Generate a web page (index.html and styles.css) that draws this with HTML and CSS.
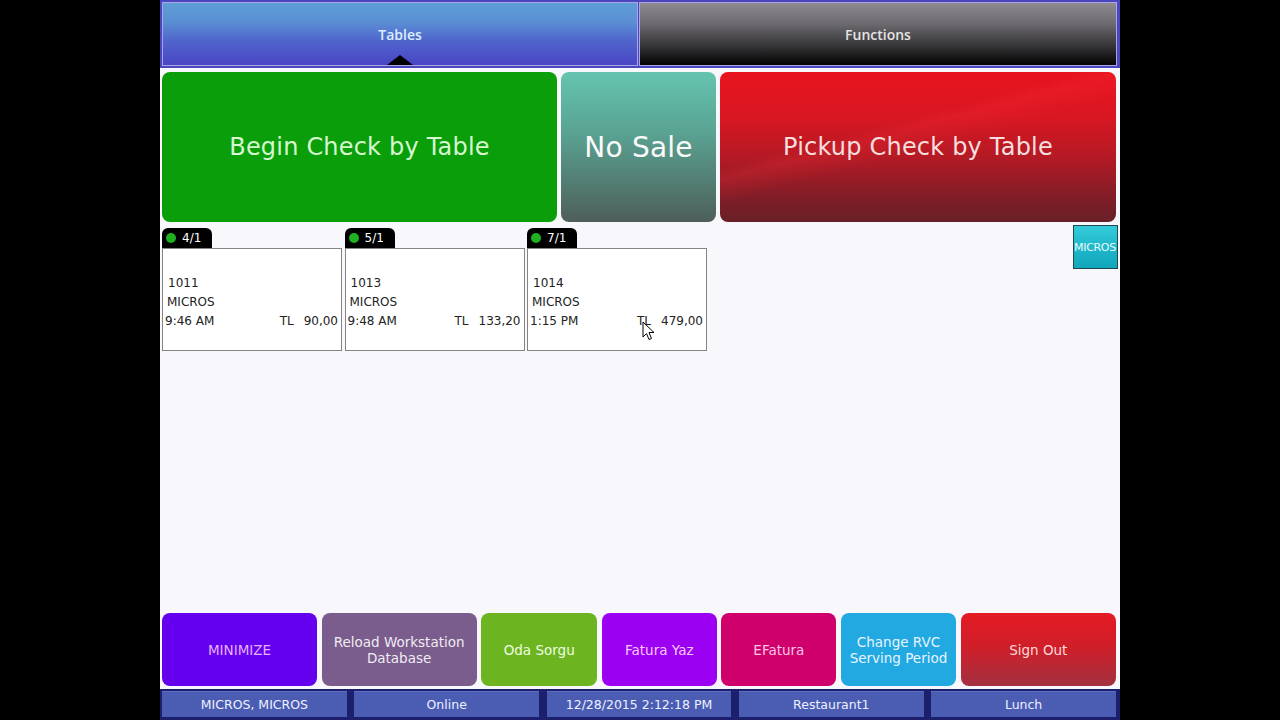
FILE: index.html
```html
<!DOCTYPE html>
<html lang="en">
<head>
    <meta charset="UTF-8">
    <title>Workstation - Tables</title>
    <link rel="stylesheet" href="styles.css">
</head>
<body>
<div class="app">
    <!-- Page tabs -->
    <div class="tabs">
        <div class="tab tab-active">Tables<span class="tab-arrow"></span></div>
        <div class="tab tab-dark">Functions</div>
    </div>

    <div class="main">
        <div class="actions">
            <div class="action action-begin">Begin Check by Table</div>
            <div class="action action-nosale">No Sale</div>
            <div class="action action-pickup">Pickup Check by Table</div>
        </div>

        <div class="table-row">
            <div class="checks">
                <div class="check">
                    <div class="check-tab"><span class="dot"></span>4/1</div>
                    <div class="check-body">
                        <div class="line">1011</div>
                        <div class="line">MICROS</div>
                        <div class="line split"><span>9:46 AM</span><span>TL<span class="amt">90,00</span></span></div>
                    </div>
                </div>
                <div class="check">
                    <div class="check-tab"><span class="dot"></span>5/1</div>
                    <div class="check-body">
                        <div class="line">1013</div>
                        <div class="line">MICROS</div>
                        <div class="line split"><span>9:48 AM</span><span>TL<span class="amt">133,20</span></span></div>
                    </div>
                </div>
                <div class="check">
                    <div class="check-tab"><span class="dot"></span>7/1</div>
                    <div class="check-body">
                        <div class="line">1014</div>
                        <div class="line">MICROS</div>
                        <div class="line split"><span>1:15 PM</span><span>TL<span class="amt">479,00</span></span></div>
                    </div>
                </div>
            </div>
            <div class="side-btn">MICROS</div>
        </div>

        <div class="keys">
            <div class="key key-min">MINIMIZE</div>
            <div class="key key-reload">Reload Workstation Database</div>
            <div class="key key-oda">Oda Sorgu</div>
            <div class="key key-fatura">Fatura Yaz</div>
            <div class="key key-efatura">EFatura</div>
            <div class="key key-rvc">Change RVC Serving Period</div>
            <div class="key key-signout">Sign Out</div>
        </div>
    </div>

    <div class="status">
        <div class="cell">MICROS, MICROS</div>
        <div class="cell">Online</div>
        <div class="cell">12/28/2015 2:12:18 PM</div>
        <div class="cell">Restaurant1</div>
        <div class="cell">Lunch</div>
    </div>
</div>

<svg class="pointer" width="13" height="20" viewBox="0 0 13 20">
    <path d="M1 1 L1 16 L4.5 12.5 L7 18.5 L9.5 17.5 L7 11.5 L12 11.5 Z" fill="#fff" stroke="#000" stroke-width="1"/>
</svg>
</body>
</html>
```

FILE: styles.css
```css
* {
    margin: 0;
    padding: 0;
    box-sizing: border-box;
}

body {
    background: #000;
    font-family: 'DejaVu Sans', Verdana, sans-serif;
    height: 720px;
    overflow: hidden;
    position: relative;
}

.app {
    width: 960px;
    height: 720px;
    margin: 0 auto;
    background: #f8f8fc;
    display: flex;
    flex-direction: column;
}

/* ---- tabs ---- */
.tabs {
    height: 68px;
    background: #4b46bd;
    padding: 2px 3px 2px 2px;
    display: grid;
    grid-template-columns: 476px 1fr;
    gap: 1px;
}

.tab {
    position: relative;
    border: 1px solid #a9a6e6;
    display: flex;
    align-items: center;
    justify-content: center;
    font-family: 'Open Sans', sans-serif;
    font-size: 14px;
    font-weight: 600;
}

.tab-active {
    background: linear-gradient(180deg, #5d9fd6 0%, #5b8fd4 30%, #5066cc 60%, #4a45c4 100%);
    color: #dceeff;
}

.tab-dark {
    background: linear-gradient(180deg, #8e8b92 0%, #6a686c 35%, #2c2b2d 75%, #030303 100%);
    color: #e4e4e4;
}

.tab-arrow {
    position: absolute;
    left: 50%;
    bottom: 0;
    margin-left: -13px;
    width: 0;
    height: 0;
    border-left: 13px solid transparent;
    border-right: 13px solid transparent;
    border-bottom: 10px solid #000;
}

/* ---- main area ---- */
.main {
    flex: 1;
    display: flex;
    flex-direction: column;
    padding: 4px 4px 3px 2px;
}

.actions {
    display: grid;
    grid-template-columns: 395px 155px 1fr;
    gap: 4px;
    height: 150px;
}

.action {
    border-radius: 8px;
    display: flex;
    align-items: center;
    justify-content: center;
    font-size: 24px;
    letter-spacing: 0.2px;
}

.action-begin {
    background: #0b9e0b;
    color: #d6f7cf;
}

.action-nosale {
    background: linear-gradient(180deg, #64c4af 0%, #5aa393 40%, #51766c 80%, #4e5e59 100%);
    color: #fafafa;
    font-size: 28px;
}

.action-pickup {
    background:
        linear-gradient(165deg, transparent 38%, rgba(255, 50, 60, 0.18) 42%, transparent 52%),
        linear-gradient(180deg, #e8141f 0%, #d81722 30%, #b21a25 58%, #7e1d27 85%, #682028 100%);
    color: #f7dfdf;
}

/* ---- open checks ---- */
.table-row {
    display: flex;
    justify-content: space-between;
    margin-top: 3px;
    margin-right: -2px;
}

.checks {
    display: flex;
    gap: 2.5px;
    padding-top: 3px;
}

.check {
    width: 180px;
}

.check-tab {
    width: 50px;
    height: 20px;
    background: #000;
    border-radius: 6px 6px 0 0;
    color: #fff;
    font-size: 12px;
    display: flex;
    align-items: center;
    padding-left: 4px;
    gap: 6px;
}

.dot {
    width: 10px;
    height: 10px;
    border-radius: 50%;
    background: #21b021;
}

.check-body {
    height: 103px;
    background: #fff;
    border: 1px solid #858585;
    padding: 25px 3px 0 4px;
    font-size: 12px;
    color: #222;
}

.line {
    line-height: 19px;
}

.line:first-child {
    padding-left: 1px;
}

.line:last-child {
    margin-left: -2px;
}

.split {
    display: flex;
    justify-content: space-between;
}

.amt {
    margin-left: 10px;
}

.side-btn {
    width: 45px;
    height: 44px;
    background: linear-gradient(180deg, #34cbd9 0%, #1cb4c8 60%, #12a6bb 100%);
    border: 1px solid #1f4950;
    color: #e8fbff;
    font-size: 11px;
    display: flex;
    align-items: center;
    overflow: hidden;
    white-space: nowrap;
    letter-spacing: -0.3px;
}

/* ---- bottom keys ---- */
.keys {
    margin-top: auto;
    display: grid;
    grid-template-columns: 155px 155px 116px 115px 115px 115px 1fr;
    gap: 4.6px;
    height: 73px;
}

.key {
    border-radius: 8px;
    display: flex;
    align-items: center;
    justify-content: center;
    text-align: center;
    font-size: 13.5px;
    line-height: 16px;
    padding: 0 8px;
}

.key-min { background: #6500ee; color: #e6b2ff; }
.key-reload { background: #7a5d8c; color: #f0ecf4; }
.key-oda { background: #6db520; color: #eefde0; }
.key-fatura { background: #9b00f2; color: #fbc8ff; }
.key-efatura { background: #cf006b; color: #ffc6e4; }
.key-rvc { background: #22a9e2; color: #e6f4ff; padding: 0 4px; }

.key-signout {
    background: linear-gradient(180deg, #e41b24 0%, #d01e29 45%, #b42a38 80%, #a3303f 100%);
    color: #ffd8d8;
}

/* ---- status bar ---- */
.status {
    height: 31px;
    background: #1b1f6c;
    padding: 2px 4px 3px 2px;
    display: grid;
    grid-template-columns: repeat(5, 1fr);
    gap: 7.5px;
}

.cell {
    background: #4a5db3;
    border-top: 1px solid #5d70c4;
    color: #eef0ff;
    font-size: 12.5px;
    display: flex;
    align-items: center;
    justify-content: center;
}

.pointer {
    position: absolute;
    left: 642px;
    top: 321px;
}
```
